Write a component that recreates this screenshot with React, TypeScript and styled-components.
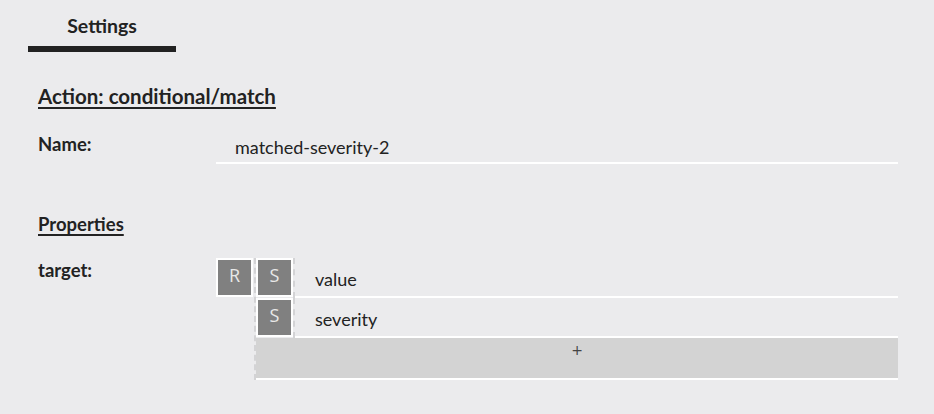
import React from "react";
import styled, { createGlobalStyle } from "styled-components";

const Global = createGlobalStyle`
  html, body { margin: 0; padding: 0; background: #ebebed; }
  body { font-family: Lato, "Open Sans", sans-serif; color: #222; }
`;

const Page = styled.div`
  width: 934px;
  height: 414px;
  background: #ebebed;
  box-sizing: border-box;
`;

const TabBar = styled.div`
  display: flex;
  padding-left: 28px;
`;

const Tab = styled.div`
  width: 148px;
  height: 46px;
  box-sizing: content-box;
  border-bottom: 6px solid #222;
  display: flex;
  align-items: center;
  justify-content: center;
  font-size: 19.5px;
  font-weight: 700;
  line-height: 24px;
  & > span { margin-top: 6px; }
`;

const Content = styled.div`
  padding: 0 36px 0 38px;
`;

const Heading = styled.div<{ $top: number; $size: number }>`
  font-size: ${(p) => p.$size}px;
  font-weight: 700;
  text-decoration: underline;
  text-underline-offset: 3px;
  text-decoration-thickness: 2px;
  line-height: 22px;
  margin-top: ${(p) => p.$top}px;
`;

const FieldRow = styled.div<{ $top: number }>`
  display: grid;
  grid-template-columns: 178px 1fr;
  margin-top: ${(p) => p.$top}px;
  align-items: start;
`;

const Label = styled.div<{ $pad: number }>`
  font-size: 18.5px;
  font-weight: 700;
  line-height: 20px;
  padding-top: ${(p) => p.$pad}px;
`;

const TextInput = styled.div`
  height: 36px;
  box-sizing: border-box;
  border-bottom: 2px solid #fff;
  padding-left: 19px;
  font-size: 18px;
  line-height: 20px;
  display: flex;
  align-items: center;
  padding-top: 4px;
`;

const Editor = styled.div`
  display: flex;
  align-items: flex-start;
`;

const Handle = styled.div`
  width: 37px;
  height: 39px;
  box-sizing: border-box;
  border: 2px solid #fff;
  background: #808080;
  color: #e8e8e8;
  font-family: "Open Sans", "Noto Sans", sans-serif;
  font-weight: 400;
  font-size: 18px;
  display: flex;
  justify-content: center;
  padding-top: 4px;
  line-height: 22px;
`;

const List = styled.div`
  flex: 1;
  margin-left: 1px;
  border-left: 2px dashed #d3d3d5;
  display: flex;
  flex-direction: column;
`;

const Item = styled.div`
  display: flex;
  align-items: flex-start;
`;

const ItemHandle = styled.div`
  border-right: 2px dashed #d3d3d5;
  height: 40px;
  box-sizing: border-box;
  display: flex;
  align-items: flex-start;
`;

const ItemField = styled.div`
  flex: 1;
  height: 40px;
  box-sizing: border-box;
  border-bottom: 2px solid #fff;
  padding-left: 20px;
  font-size: 18px;
  line-height: 20px;
  display: flex;
  align-items: center;
  padding-top: 3px;
`;

const AddButton = styled.div`
  height: 42px;
  box-sizing: border-box;
  background: #d3d3d3;
  border-bottom: 2px solid #fff;
  text-align: center;
  font-family: "DejaVu Sans", sans-serif;
  font-size: 14px;
  line-height: 24px;
  color: #444;
`;

export default function App() {
  return (
    <Page>
      <Global />
      <TabBar>
        <Tab>
          <span>Settings</span>
        </Tab>
      </TabBar>
      <Content>
        <Heading $top={33} $size={20.5}>Action: conditional/match</Heading>
        <FieldRow $top={21}>
          <Label $pad={6}>Name:</Label>
          <TextInput>matched-severity-2</TextInput>
        </FieldRow>
        <Heading $top={49} $size={18.5}>Properties</Heading>
        <FieldRow $top={23}>
          <Label $pad={2}>target:</Label>
          <Editor>
            <Handle>R</Handle>
            <List>
              <Item>
                <ItemHandle>
                  <Handle>S</Handle>
                </ItemHandle>
                <ItemField>value</ItemField>
              </Item>
              <Item>
                <ItemHandle>
                  <Handle>S</Handle>
                </ItemHandle>
                <ItemField>severity</ItemField>
              </Item>
              <AddButton>+</AddButton>
            </List>
          </Editor>
        </FieldRow>
      </Content>
    </Page>
  );
}
